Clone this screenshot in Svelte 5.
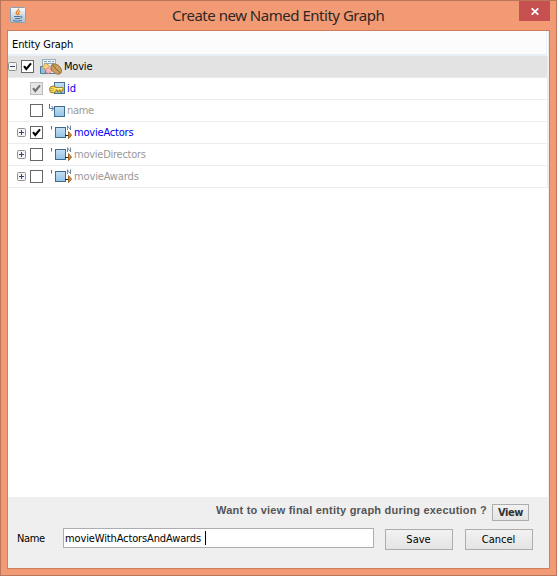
<script>
  const rows = [
    { label: 'id', kind: 'key', checked: true, disabled: true, active: true, spacing: -0.1 },
    { label: 'name', kind: 'basic', spacing: -0.3 },
    { label: 'movieActors', kind: 'relation', expandable: true, checked: true, active: true, spacing: -0.2 },
    { label: 'movieDirectors', kind: 'relation', expandable: true, spacing: -0.25 },
    { label: 'movieAwards', kind: 'relation', expandable: true, spacing: -0.14 }
  ];
</script>

{#snippet checkbox(checked, disabled)}
  <svg class="box" width="13" height="13" viewBox="0 0 13 13">
    <rect x=".5" y=".5" width="12" height="12" fill={disabled ? '#e6e6e6' : '#fff'} stroke={disabled ? '#bcbcbc' : '#666'} />
    {#if checked}
      <path d="M3 6.2 5.3 9 10 3.4" fill="none" stroke={disabled ? '#707070' : '#000'} stroke-width="2.1" />
    {/if}
  </svg>
{/snippet}

{#snippet expander(open)}
  <svg width="9" height="9" viewBox="0 0 9 9">
    <rect x=".5" y=".5" width="8" height="8" rx="1" fill="#f4f4f4" stroke="#919191" />
    <path d={open ? 'M2 4.5h5' : 'M2 4.5h5M4.5 2v5'} stroke="#31477c" />
  </svg>
{/snippet}

<svg width="0" height="0" class="defs">
  <defs>
    <linearGradient id="blue" x2="0" y2="1"><stop stop-color="#c4e0f4" /><stop offset="1" stop-color="#93c4e6" /></linearGradient>
    <linearGradient id="tile" x2="0" y2="1"><stop stop-color="#fafcfd" /><stop offset="1" stop-color="#a9bfcf" /></linearGradient>
  </defs>
</svg>

<div class="window">
  <header>
    <svg class="java" width="16" height="16" viewBox="0 0 16 16">
      <rect x=".5" y=".5" width="15" height="15" rx="1" fill="url(#tile)" stroke="#8ba0b0" />
      <path d="M8.8 1.5C9 4 5.5 4.2 6.3 6.3L7.8 8M10.3 4C8 5 8.3 6 9 8" fill="none" stroke="#ee7d22" stroke-width="1.3" />
      <path d="M4 9.5h6.5M5 11.5h5M10.5 9.3c2.3-.7 2.2 1.5 0 2M3 13.5c2.5.8 6.5.7 9-.2" fill="none" stroke="#49739a" />
    </svg>
    <h1>Create new Named Entity Graph</h1>
    <button class="close" aria-label="Close">
      <svg width="8" height="7" viewBox="0 0 8 7"><path d="M.7.3 7.3 6.7M7.3.3.7 6.7" stroke="#fff" stroke-width="1.7" /></svg>
    </button>
  </header>

  <main>
    <section class="tree">
      <div class="column"><span>Entity Graph</span></div>
      <div class="row root">
        {@render expander(true)}
        {@render checkbox(true, false)}
        <svg class="entity" width="22" height="16" viewBox="0 0 22 16">
          <rect x="2.5" y=".5" width="13" height="11" fill="#eaf3f9" stroke="#9ab1c4" />
          <path d="M4 2.5h3M8 2.5h3M12 2.5h2M4 4.5h10" stroke="#8ca7be" />
          <path d="M.5 7.5h5v7h-5z" fill="#8fbddd" stroke="#4b7898" />
          <path d="M1 14.5h14" stroke="#557f9b" />
          <path d="m5.5 4 4 3-3.3 4.2-4-3z" fill="#f6cf83" stroke="#c28e42" stroke-width=".8" />
          <circle cx="8.5" cy="11.5" r="2.8" fill="#f9b9b1" stroke="#dc877f" stroke-width=".8" />
          <ellipse cx="16.2" cy="10" rx="6.2" ry="4.1" transform="rotate(42 16.2 10)" fill="#cca05c" stroke="#8a632e" stroke-width=".8" />
          <path d="M12.5 6.5c2.500.8 2.500 3 4 4s2.200 1.500 3 3.200" fill="none" stroke="#704b1f" stroke-width=".8" />
        </svg>
        <span class="movie">Movie</span>
      </div>
      {#each rows as row}
        <div class="row child" class:active={row.active}>
          <span class="slot">{#if row.expandable}{@render expander(false)}{/if}</span>
          {@render checkbox(row.checked, row.disabled)}
          {#if row.kind === 'key'}
            <svg class="icon" width="16" height="13" viewBox="0 0 16 13">
              <rect x="5.5" y=".5" width="10" height="11" fill="url(#blue)" stroke="#47728f" />
              <path d="M6 5.500h8v3h-1v2h-1.500v-2H10v1.500H8.500V8.500H6z" fill="#f7da45" stroke="#806413" stroke-width=".7" />
              <ellipse cx="4" cy="7.500" rx="3.500" ry="3.500" fill="#f7da45" stroke="#94731b" stroke-width=".9" />
              <path d="M5.500 6.600h8" stroke="#fff29b" />
              <circle cx="2.900" cy="7.500" r="1.100" fill="#fff" stroke="#94731b" stroke-width=".6" />
            </svg>
          {:else if row.kind === 'basic'}
            <svg class="icon" width="16" height="15" viewBox="0 0 16 15">
              <path d="M.5 1v4.500h4M2.500 3l2.300 2.500L2.500 8" fill="none" stroke="#4674a4" />
              <rect x="5.500" y="3.500" width="10" height="10" fill="url(#blue)" stroke="#3f6c8c" />
            </svg>
          {:else}
            <svg class="icon relation" width="21" height="15" viewBox="0 0 21 15">
              <path d="M.5 1v3.500" stroke="#4f6c8b" />
              <rect x="4.500" y="2.500" width="10" height="10" fill="url(#blue)" stroke="#3f6c8c" />
              <path d="M16.500 5V.5M19.500 5V.5M16.500 1l3 3.500" fill="none" stroke="#5f7f9c" stroke-width=".9" />
              <path d="M14 10.500h4" stroke="#222" />
              <path d="M17.500 6.500 20.600 10.200l-3.100 3.500z" fill="#d08d36" stroke="#94530b" stroke-width=".8" />
            </svg>
          {/if}
          <span class="label" style:letter-spacing="{row.spacing}px">{row.label}</span>
        </div>
      {/each}
    </section>

    <footer>
      <div class="question">
        <strong>Want to view final entity graph during execution ?</strong>
        <button class="view"><span>View</span></button>
      </div>
      <div class="form">
        <span class="name">Name</span>
        <div class="field"><span>movieWithActorsAndAwards</span><i></i></div>
        <button class="save"><span>Save</span></button>
        <button class="cancel"><span>Cancel</span></button>
      </div>
    </footer>
  </main>
</div>

<style>
  .defs { position: absolute; }
  * { box-sizing: border-box; }
  .window {
    width: 557px; height: 576px; padding: 0 6px 6px;
    border: 1px solid #b9765a; background: #f19a74;
    display: flex; flex-direction: column;
    font: 11px/14px "DejaVu Sans Condensed", "DejaVu Sans", sans-serif;
    font-stretch: condensed;
    color: #000; overflow: hidden;
  }
  svg { display: block; flex: none; }
  header { height: 29px; flex: none; display: flex; align-items: flex-start; }
  .java { margin: 6px 0 0 3px; }
  h1 {
    margin: 3px 0 0 146px; width: 347px;
    font: 400 15px/22px "Noto Sans", "Open Sans", sans-serif;
    color: #2f2723; white-space: nowrap; letter-spacing: -.48px;
  }
  .close {
    width: 31px; height: 20px; flex: none; padding: 0; border: 0; background: #c75050;
    margin-left: auto;
    display: flex; align-items: center; justify-content: center;
  }
  main { flex: 1; border: 1px solid #cf7e5c; background: #efefef; display: flex; flex-direction: column; }
  .tree { height: 466px; width: 540px; background: #fff; }
  .column { width: 539px; height: 25px; background: #fcfcfc; border-bottom: 2px solid #e9eff7; padding: 7px 0 0 4px; border-right: 1px solid #e9eff7; }
  .column span { letter-spacing: -.1px; }
  .row { width: 540px; height: 22px; display: flex; align-items: center; border-bottom: 1px solid #ececec; white-space: nowrap; border-right: 1px solid #ececec; }
  .root { background: #e3e3e3; }
  .root .box { margin-left: 4px; }
  .entity { margin-left: 6px; }
  .movie { margin-left: 2px; letter-spacing: -.2px; }
  .child { color: #999; }
  .active { color: #0000f0; }
  .slot { width: 9px; margin: 0 4px 0 9px; }
  .icon { margin-left: 6px; }
  .relation { margin-left: 8px; }
  .label { margin-left: 2px; }
  footer { flex: 1; }
  .question { display: flex; padding: 7px 0 0 208px; }
  strong { width: 276px; font: bold 11px/13px "Liberation Sans", sans-serif; color: #555; letter-spacing: .22px; white-space: nowrap; }
  button { color: #000; font: inherit; border: 1px solid #adadad; background: linear-gradient(#f2f2f2, #e4e4e4); padding: 0; display: flex; align-items: center; justify-content: center; }
  .view { width: 37px; height: 17px; font-weight: bold; color: #333; }
  .view span { letter-spacing: -.4px; }
  .form { display: flex; margin-top: 7px; }
  .name { width: 55px; padding: 4px 0 0 9px; letter-spacing: -.4px; }
  .field { width: 311px; height: 20px; background: #fff; border: 1px solid #abadb3; display: flex; align-items: center; padding-left: 1px; }
  .field span { letter-spacing: -.13px; width: 140px; white-space: nowrap; padding-top: 1px; }
  .field i { width: 1px; height: 14px; background: #000; }
  .save, .cancel { width: 68px; height: 21px; margin: 1px 0 0 11px; }
  .cancel { margin-left: 12px; }
  .save span, .cancel span { margin-left: -1px; }
</style>
